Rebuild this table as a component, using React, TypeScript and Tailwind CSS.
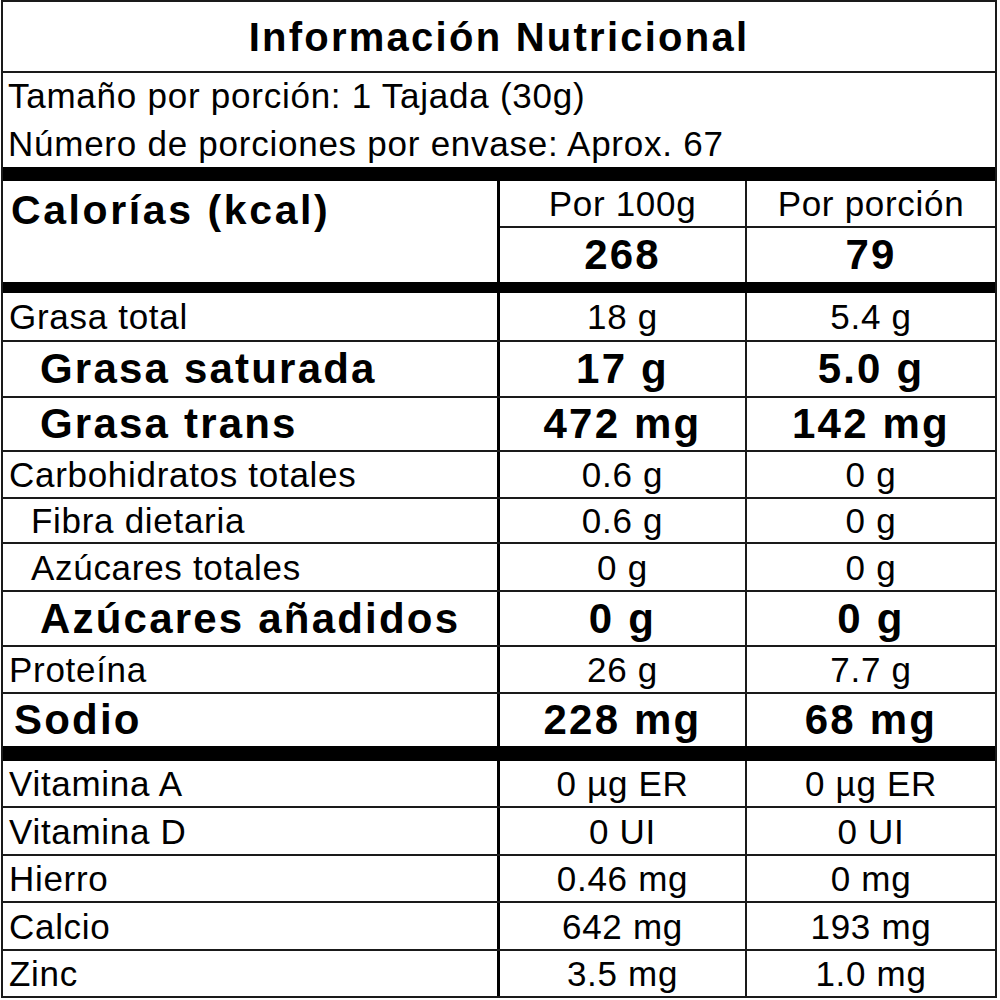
type Variant = 'normal' | 'sub' | 'bold' | 'sodio';

interface RowProps {
  label: string;
  per100: string;
  perPortion: string;
  variant?: Variant;
  height: string;
  last?: boolean;
}

const regular = 'text-[35px] leading-none tracking-[0.7px] font-normal';
const heavy = 'text-[42px] leading-none tracking-[2.2px] font-bold';

const labelPad: Record<Variant, string> = {
  normal: 'pl-[6px]',
  sub: 'pl-[28px]',
  bold: 'pl-[37px]',
  sodio: 'pl-[11px]',
};

function Row({ label, per100, perPortion, variant = 'normal', height, last }: RowProps) {
  const isBold = variant === 'bold' || variant === 'sodio';
  const text = isBold ? heavy : regular;

  return (
    <div className={`flex ${height} ${last ? '' : 'border-b-2 border-[#1a1a1a]'}`}>
      <div
        className={`flex w-[497px] shrink-0 items-center whitespace-nowrap border-r-[3px] border-black ${labelPad[variant]} ${text}`}
      >
        {label}
      </div>
      <div
        className={`flex w-[247px] shrink-0 items-center justify-center whitespace-nowrap border-r-2 border-[#1a1a1a] ${text}`}
      >
        {per100}
      </div>
      <div className={`flex flex-1 items-center justify-center whitespace-nowrap ${text}`}>
        {perPortion}
      </div>
    </div>
  );
}

export default function App() {
  return (
    <div className="min-h-screen bg-white font-['Liberation_Sans',Arial,sans-serif] text-black">
      <div className="ml-[1px] w-[996px] border-2 border-[#1a1a1a] bg-white">
        {/* Title */}
        <div className="flex h-[71px] items-center justify-center border-b-2 border-[#1a1a1a] text-[40px] font-bold leading-none tracking-[2.25px]">
          Información Nutricional
        </div>

        {/* Serving info */}
        <div className="flex h-[94px] flex-col justify-center pl-[5px] text-[35px] leading-[48px] tracking-[0.75px]">
          <p>Tamaño por porción: 1 Tajada (30g)</p>
          <p>Número de porciones por envase: Aprox. 67</p>
        </div>

        <div className="h-[14px] bg-black" />

        {/* Calories */}
        <div className="flex h-[101px]">
          <div className="w-[497px] shrink-0 border-r-[3px] border-black pl-[8px] pt-[9px] text-[41px] font-bold leading-none tracking-[2.6px]">
            Calorías (kcal)
          </div>
          <div className="flex flex-1 flex-col">
            <div className="flex h-[47px] border-b-2 border-[#1a1a1a]">
              <div className={`flex w-[247px] shrink-0 items-center justify-center border-r-2 border-[#1a1a1a] ${regular}`}>
                Por 100g
              </div>
              <div className={`flex flex-1 items-center justify-center ${regular}`}>Por porción</div>
            </div>
            <div className="flex flex-1">
              <div className={`flex w-[247px] shrink-0 items-center justify-center border-r-2 border-[#1a1a1a] ${heavy}`}>
                268
              </div>
              <div className={`flex flex-1 items-center justify-center ${heavy}`}>79</div>
            </div>
          </div>
        </div>

        <div className="h-[11px] bg-black" />

        {/* Nutrients */}
        <Row label="Grasa total" per100="18 g" perPortion="5.4 g" height="h-[49px]" />
        <Row label="Grasa saturada" per100="17 g" perPortion="5.0 g" variant="bold" height="h-[56px]" />
        <Row label="Grasa trans" per100="472 mg" perPortion="142 mg" variant="bold" height="h-[54px]" />
        <Row label="Carbohidratos totales" per100="0.6 g" perPortion="0 g" height="h-[47px]" />
        <Row label="Fibra dietaria" per100="0.6 g" perPortion="0 g" variant="sub" height="h-[45px]" />
        <Row label="Azúcares totales" per100="0 g" perPortion="0 g" variant="sub" height="h-[48px]" />
        <Row label="Azúcares añadidos" per100="0 g" perPortion="0 g" variant="bold" height="h-[55px]" />
        <Row label="Proteína" per100="26 g" perPortion="7.7 g" height="h-[47px]" />
        <Row label="Sodio" per100="228 mg" perPortion="68 mg" variant="sodio" height="h-[52px]" last />

        <div className="h-[15px] bg-black" />

        {/* Vitamins & minerals */}
        <Row label="Vitamina A" per100="0 µg ER" perPortion="0 µg ER" height="h-[47px]" />
        <Row label="Vitamina D" per100="0 UI" perPortion="0 UI" height="h-[48px]" />
        <Row label="Hierro" per100="0.46 mg" perPortion="0 mg" height="h-[47px]" />
        <Row label="Calcio" per100="642 mg" perPortion="193 mg" height="h-[48px]" />
        <Row label="Zinc" per100="3.5 mg" perPortion="1.0 mg" height="h-[45px]" last />
      </div>
    </div>
  );
}
